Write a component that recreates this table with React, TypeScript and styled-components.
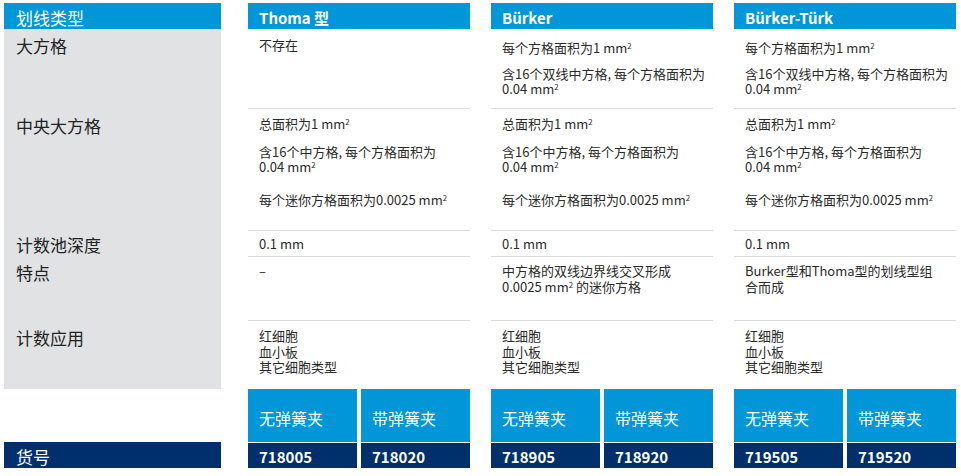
import React from "react";
import styled, { createGlobalStyle } from "styled-components";

const GlobalStyle = createGlobalStyle`
  html, body { margin: 0; padding: 0; background: #ffffff; }
  body { font-family: "Noto Sans CJK SC", "Noto Sans", sans-serif; color: #222; }
  * { box-sizing: border-box; }
`;

const BLUE = "#0096d7";
const NAVY = "#00306c";
const GRAY = "#e1e2e4";
const ROWS = "26px 80px 122px 26px 64px 68px 53px 26px";

const Page = styled.div`
  display: flex;
  gap: 21px;
  padding: 3px 0 0 4px;
  width: 961px;
  height: 476px;
`;

const Column = styled.div<{ $w: number; $after?: number }>`
  display: grid;
  grid-template-rows: ${ROWS};
  width: ${(p) => p.$w}px;
  margin-right: ${(p) => p.$after ?? 0}px;
`;

const Header = styled.div<{ $bold?: boolean }>`
  background: ${BLUE};
  color: #fff;
  display: flex;
  align-items: center;
  padding: 2px 0 0 ${(p) => (p.$bold ? 11 : 12)}px;
  font-size: ${(p) => (p.$bold ? 15 : 17)}px;
  font-weight: ${(p) => (p.$bold ? 700 : 400)};
  white-space: nowrap;
`;

const Label = styled.div<{ $pt: number }>`
  background: ${GRAY};
  padding: ${(p) => p.$pt}px 0 0 12px;
  font-size: 17px;
  line-height: 20px;
  color: #222;
`;

const Spacer = styled.div``;

const NavyLabel = styled.div`
  background: ${NAVY};
  color: #fff;
  font-size: 17px;
  display: flex;
  align-items: center;
  padding: 2px 0 0 12px;
`;

const Cell = styled.div<{ $pt: number; $line?: boolean }>`
  padding: ${(p) => p.$pt}px 0 0 11px;
  border-bottom: ${(p) => (p.$line ? "1px solid #dcdcdc" : "none")};
  font-size: 13px;
  line-height: 15.5px;
  color: #2a2a2a;
`;

const Para = styled.p<{ $mt?: number }>`
  margin: ${(p) => p.$mt ?? 0}px 0 0 0;
  white-space: nowrap;
`;

const Sup = styled.sup`
  font-size: 0.6em;
  line-height: 0;
  vertical-align: 0.55em;
`;

const PairRow = styled.div<{ $navy?: boolean }>`
  display: grid;
  grid-template-columns: 1fr 1fr;
  column-gap: 4px;
  margin-top: ${(p) => (p.$navy ? 1 : 0)}px;
`;

const VariantButton = styled.div`
  background: ${BLUE};
  color: #fff;
  font-size: 16px;
  display: flex;
  align-items: center;
  padding: 4px 0 0 11px;
`;

const ArticleNo = styled.div`
  background: ${NAVY};
  color: #fff;
  font-size: 15px;
  font-weight: 700;
  display: flex;
  align-items: center;
  padding: 2px 0 0 11px;
`;

const mm2 = (
  <>
    mm<Sup>2</Sup>
  </>
);

type Product = {
  name: string;
  big: { pt: number; paras: React.ReactNode[] };
  feature: React.ReactNode;
  ids: [string, string];
};

const products: Product[] = [
  {
    name: "Thoma 型",
    big: { pt: 8, paras: ["不存在"] },
    feature: "–",
    ids: ["718005", "718020"],
  },
  {
    name: "Bürker",
    big: {
      pt: 11,
      paras: [
        <>每个方格面积为1 {mm2}</>,
        <>
          含16个双线中方格, 每个方格面积为
          <br />
          0.04 {mm2}
        </>,
      ],
    },
    feature: (
      <>
        中方格的双线边界线交叉形成
        <br />
        0.0025 {mm2} 的迷你方格
      </>
    ),
    ids: ["718905", "718920"],
  },
  {
    name: "Bürker-Türk",
    big: {
      pt: 11,
      paras: [
        <>每个方格面积为1 {mm2}</>,
        <>
          含16个双线中方格, 每个方格面积为
          <br />
          0.04 {mm2}
        </>,
      ],
    },
    feature: (
      <>
        Burker型和Thoma型的划线型组
        <br />
        合而成
      </>
    ),
    ids: ["719505", "719520"],
  },
];

const ProductColumn: React.FC<{ p: Product }> = ({ p }) => (
  <Column $w={222}>
    <Header $bold>{p.name}</Header>
    <Cell $pt={p.big.pt} $line>
      {p.big.paras.map((t, i) => (
        <Para key={i} $mt={i === 0 ? 0 : 10}>
          {t}
        </Para>
      ))}
    </Cell>
    <Cell $pt={7} $line>
      <Para>总面积为1 {mm2}</Para>
      <Para $mt={12}>
        含16个中方格, 每个方格面积为
        <br />
        0.04 {mm2}
      </Para>
      <Para $mt={17}>每个迷你方格面积为0.0025 {mm2}</Para>
    </Cell>
    <Cell $pt={5} $line>
      <Para>0.1 mm</Para>
    </Cell>
    <Cell $pt={6} $line>
      <Para>{p.feature}</Para>
    </Cell>
    <Cell $pt={7}>
      <Para>
        红细胞
        <br />
        血小板
        <br />
        其它细胞类型
      </Para>
    </Cell>
    <PairRow>
      <VariantButton>无弹簧夹</VariantButton>
      <VariantButton>带弹簧夹</VariantButton>
    </PairRow>
    <PairRow $navy>
      <ArticleNo>{p.ids[0]}</ArticleNo>
      <ArticleNo>{p.ids[1]}</ArticleNo>
    </PairRow>
  </Column>
);

export default function App() {
  return (
    <>
      <GlobalStyle />
      <Page>
        <Column $w={217} $after={6}>
          <Header>划线类型</Header>
          <Label $pt={7}>大方格</Label>
          <Label $pt={7}>中央大方格</Label>
          <Label $pt={4}>计数池深度</Label>
          <Label $pt={6}>特点</Label>
          <Label $pt={7}>计数应用</Label>
          <Spacer />
          <NavyLabel>货号</NavyLabel>
        </Column>
        {products.map((p) => (
          <ProductColumn key={p.name} p={p} />
        ))}
      </Page>
    </>
  );
}
